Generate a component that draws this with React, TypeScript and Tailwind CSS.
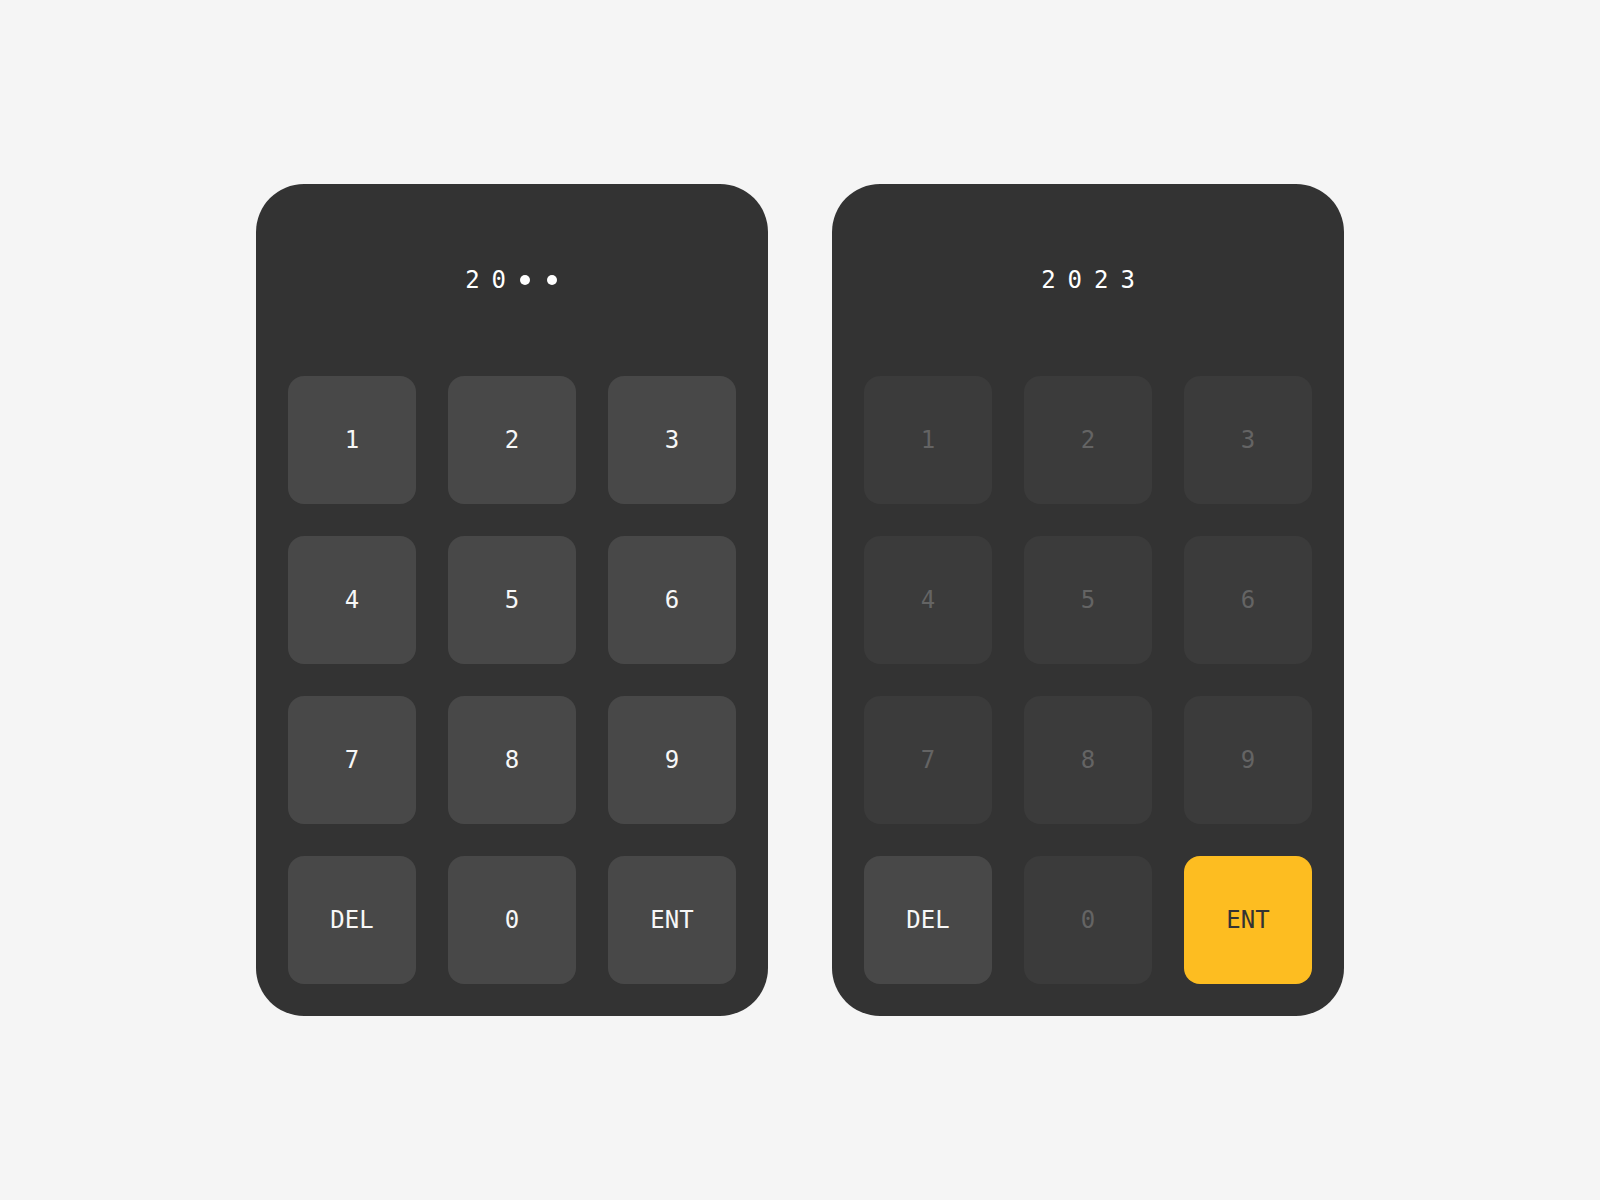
import React from "react";

type Key = { label: string; tone: "on" | "off" | "accent" };

const mono = { fontFamily: '"DejaVu Sans Mono", "Liberation Mono", monospace' };

const digits = ["1", "2", "3", "4", "5", "6", "7", "8", "9"];

function keysFor(locked: boolean): Key[] {
  const nums: Key[] = digits.map((d) => ({ label: d, tone: locked ? "off" : "on" }));
  return [
    ...nums,
    { label: "DEL", tone: "on" },
    { label: "0", tone: locked ? "off" : "on" },
    { label: "ENT", tone: locked ? "accent" : "on" },
  ];
}

function KeyButton({ k }: { k: Key }) {
  const cls =
    k.tone === "accent"
      ? "bg-[#fdbd21] text-[#333333]"
      : k.tone === "off"
      ? "bg-[#3b3b3b] text-[#646464]"
      : "bg-[#484848] text-[#f7f7f7]";
  return (
    <button
      className={`w-[128px] h-[128px] rounded-2xl flex items-center justify-center text-[24px] leading-none ${cls}`}
      style={mono}
    >
      {k.label}
    </button>
  );
}

function Display({ value }: { value: string[] }) {
  return (
    <div className="h-[128px] flex items-center justify-center gap-[12px]" style={mono}>
      {value.map((c, i) =>
        c === "*" ? (
          <span key={i} className="w-[14.4px] flex items-center justify-center">
            <span className="block w-[10px] h-[10px] rounded-full bg-white" />
          </span>
        ) : (
          <span key={i} className="w-[14.4px] text-center text-[24px] leading-none text-white">
            {c}
          </span>
        )
      )}
    </div>
  );
}

function Keypad({ value, locked }: { value: string[]; locked: boolean }) {
  return (
    <div className="w-[512px] h-[832px] rounded-[48px] bg-[#333333] p-8 flex flex-col gap-8">
      <Display value={value} />
      <div className="grid grid-cols-3 gap-8">
        {keysFor(locked).map((k) => (
          <KeyButton key={k.label} k={k} />
        ))}
      </div>
    </div>
  );
}

export default function App() {
  return (
    <div className="w-full min-h-[1200px] bg-[#f5f5f5] flex items-center justify-center gap-16">
      <Keypad value={["2", "0", "*", "*"]} locked={false} />
      <Keypad value={["2", "0", "2", "3"]} locked={true} />
    </div>
  );
}
